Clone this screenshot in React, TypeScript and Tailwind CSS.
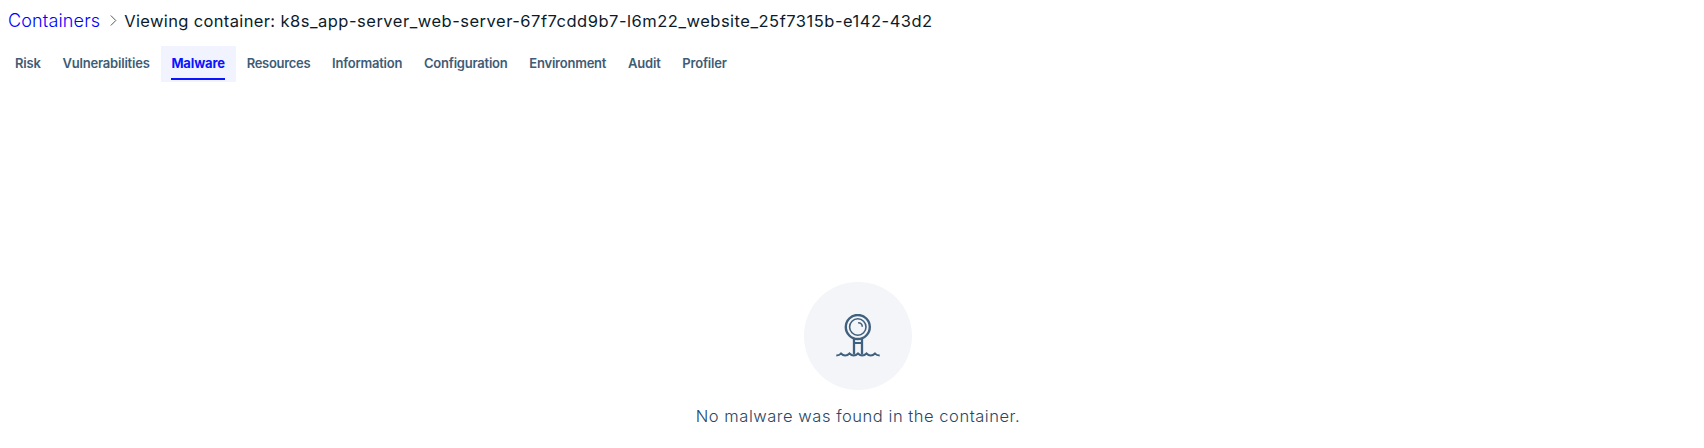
const tabs = [
  { label: "Risk", tracking: "tracking-[-0.15px]" },
  { label: "Vulnerabilities", tracking: "tracking-[-0.2px]" },
  { label: "Malware", tracking: "tracking-[-0.14px]" },
  { label: "Resources", tracking: "tracking-[-0.3px]" },
  { label: "Information", tracking: "tracking-[-0.22px]" },
  { label: "Configuration", tracking: "tracking-[-0.22px]" },
  { label: "Environment", tracking: "tracking-[-0.22px]" },
  { label: "Audit", tracking: "tracking-[-0.2px]" },
  { label: "Profiler", tracking: "tracking-[-0.2px]" },
];

function LensIcon() {
  return (
    <svg className="h-11 w-11" viewBox="0 0 44 44" fill="none" stroke="#40607f" strokeWidth="2">
      <circle cx="21.8" cy="13" r="12" strokeWidth="2.4" />
      <circle cx="21.8" cy="13" r="8.2" strokeWidth="1.6" />
      <path d="M22.1 8.8c2.4 0 4.2 1.7 4.2 4" strokeWidth="1.6" />
      <path d="M18 25v15.5M26 25v15.5" strokeWidth="2.3" />
      <path d="M18 29h8" />
      <path d="M.3 41.6c2.4 0 3.6-.7 4.7-2.1 1.3 1.4 2.5 2.1 4.2 2.1s3-.7 4.3-2.1c1.3 1.4 2.5 2.1 4.2 2.1s3-.7 4.3-2.1c1.3 1.4 2.5 2.1 4.2 2.1s3-.7 4.3-2.1c1.3 1.4 2.5 2.1 4.2 2.1s3-.7 4.3-2.1c1.1 1.4 2.3 2.1 4.7 2.1" />
    </svg>
  );
}

export default function App() {
  return (
    <div className="h-[448px] overflow-hidden bg-white font-['Inter',sans-serif]">
      <nav className="flex h-[46px] items-start pl-2 pt-[9px]">
        <a className="text-[18px] font-light leading-6 tracking-[0.15px] text-[#0000ff]">Containers</a>
        <svg className="ml-[9.5px] mr-[7.5px] mt-[6px] h-[11px] w-[7px] shrink-0" viewBox="0 0 7 11" fill="none" stroke="#4d5d57"><path d="M.8.5l5 5-5 5" /></svg>
        <h1 className="whitespace-nowrap text-[16.5px] leading-6 tracking-[0.51px] text-[#0b1b2b]"><span className="tracking-[0.35px]">Viewing container: </span>k8s_app-server_web-server-67f7cdd9b7-l6m22_website_25f7315b-e142-43d2</h1>
      </nav>
      <div className="flex h-9 pl-1">
        {tabs.map(({ label, tracking }) => {
          const active = label === "Malware";
          return (
            <button key={label} className={`flex px-[10.9px] text-[13px] leading-[35px] ${tracking} ${active ? "bg-[#f1f3ff] font-bold text-[#0a14ff]" : "font-semibold text-[#3f5c76]"}`}>
              <span className={active ? "h-[34px] border-b-2 border-[#0a14ff]" : ""}>{label}</span>
            </button>
          );
        })}
      </div>
      <main className="flex w-[1716px] flex-col items-center pt-[200px]">
        <div className="flex size-[108px] justify-center rounded-full bg-[#f3f5f9] pt-8">
          <LensIcon />
        </div>
        <p className="mt-[14px] text-[16.5px] font-light leading-6 tracking-[0.54px] text-[#294764]">No malware was found in the container.</p>
      </main>
    </div>
  );
}
